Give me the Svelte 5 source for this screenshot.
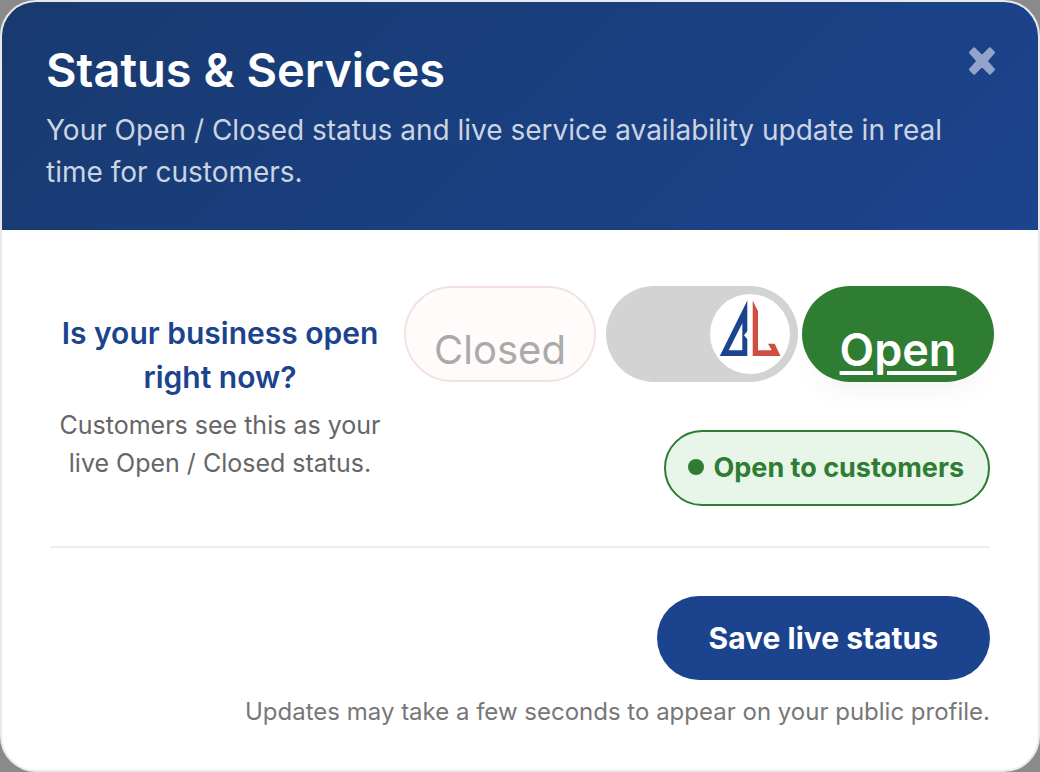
<script>
  let open = $state(true);
</script>

<main class="backdrop">
  <section class="card" aria-labelledby="title">
    <header>
      <div class="heading">
        <h1 id="title">Status &amp; Services</h1>
        <p>Your Open / Closed status and live service availability update in real time for customers.</p>
      </div>
      <button class="close" type="button" aria-label="Close">
        <svg viewBox="0 0 28 30" width="28" height="30" aria-hidden="true">
          <path d="M6 2.500 14 10.300 22 2.500 25.800 6.500 18.300 15 25.800 23.500 22 27.500 14 19.700 6 27.500 2.200 23.500 9.700 15 2.200 6.500Z" fill="currentColor" stroke="currentColor" stroke-width="2.500" stroke-linejoin="round" />
        </svg>
      </button>
    </header>

    <div class="body">
      <div class="status">
        <div class="question">
          <h2>Is your business open right now?</h2>
          <p>Customers see this as your live Open / Closed status.</p>
        </div>
        <div class="controls">
          <div class="switcher">
            <button type="button" class="choice closed" class:active={!open} onclick={() => (open = false)}>Closed</button>
            <button type="button" class="toggle" class:on={open} role="switch" aria-checked={open} aria-label="Business open" onclick={() => (open = !open)}>
              <span class="thumb">
                <svg viewBox="0 0 80 80" width="80" height="80" aria-hidden="true">
                  <path fill="#1c448e" fill-rule="evenodd" d="M37.3 6.5V37.3L34 41.3L37.3 45.3V62H9.8ZM32.3 29.3L18.7 56.3H32.3Z" />
                  <path fill="#cf4e40" d="M42.7 6.5L48 17.3V56.3H61.7L58 49.7H64.7L70.5 62H42.7Z" />
                </svg>
              </span>
            </button>
            <button type="button" class="choice open" class:active={open} onclick={() => (open = true)}>Open</button>
          </div>
          <div class="badge" role="status"><span class="dot"></span>{open ? 'Open to customers' : 'Closed to customers'}</div>
        </div>
      </div>

      <footer>
        <button type="button" class="save">Save live status</button>
        <p>Updates may take a few seconds to appear on your public profile.</p>
      </footer>
    </div>
  </section>
</main>

<style>
  :global(body) { margin: 0; background: #8a8a8a; }
  * { box-sizing: border-box; }
  h1, h2, p { margin: 0; }
  button { font: inherit; border: 0; padding: 0; cursor: pointer; }
  .backdrop { min-height: 100vh; display: grid; font-family: Inter, "Liberation Sans", sans-serif; }
  .card { border: 2px solid #e9e9e9; border-radius: 36px; overflow: hidden; background: #fff; }
  header {
    display: flex;
    justify-content: space-between;
    align-items: flex-start;
    padding: 40px 42px 36px 44px;
    color: #fff;
    background: linear-gradient(135deg, #183a70, #1c448e);
  }
  .heading { max-width: 900px; }
  h1 { font-size: 47px; line-height: 56px; font-weight: 600; margin-bottom: 11px; }
  header p { font-size: 28px; line-height: 42px; padding-bottom: 1px; color: #cbd4e2; }
  .close { display: block; flex: none; margin-top: 4px; background: none; color: #92a4ca; }
  .close svg { display: block; }
  .body { padding: 56px 48px 40px; }
  .status {
    display: grid;
    grid-template-columns: minmax(0, 340px) auto;
    justify-content: space-between;
    align-items: center;
    padding-bottom: 40px;
    border-bottom: 2px solid #eee;
  }
  .question { text-align: center; }
  h2 { font-size: 30px; line-height: 44px; font-weight: 600; color: #1c448e; }
  .question p { font-size: 25px; line-height: 38px; margin-top: 7px; color: #666; }
  .controls { display: flex; flex-direction: column; align-items: flex-end; gap: 48px; }
  .switcher { display: flex; margin-right: -4px; }
  .choice {
    width: 192px;
    height: 96px;
    padding-top: 32px;
    border-radius: 48px;
    font-size: 40px;
    line-height: 60px;
  }
  .closed { border: 2px solid #f3e2e2; background: #fffbfb; color: #aaa; }
  .open { background: #2e7d32; color: #fff; }
  .choice.active { font-size: 45px; font-weight: 600; text-decoration: underline; text-decoration-thickness: 4px; text-underline-offset: 5px; box-shadow: 0 20px 28px -12px #0000000d; }
  .closed.active { color: #b3261e; }
  .open:not(.active) { opacity: 0.5; }
  .toggle { display: flex; align-items: center; width: 192px; height: 96px; margin: 0 4px 0 10px; padding: 8px; border-radius: 48px; background: #d3d3d3; }
  .toggle.on { justify-content: flex-end; }
  .thumb { width: 80px; height: 80px; border-radius: 50%; background: #fff; }
  .thumb svg { display: block; }
  .badge {
    display: flex;
    align-items: center;
    gap: 9px;
    height: 76px;
    padding: 0 24px 2px 22px;
    border: 2px solid #2e7d32;
    border-radius: 38px;
    background: #e8f5e9;
    color: #2e7d32;
    font-size: 27px;
    font-weight: 700;
    white-space: nowrap;
  }
  .dot { width: 16px; height: 16px; border-radius: 50%; background: currentColor; }
  footer { display: flex; flex-direction: column; align-items: flex-end; padding-top: 48px; }
  .save { height: 84px; padding: 0 52px; border-radius: 42px; background: #1c448e; color: #fff; font-size: 30px; font-weight: 700; }
  footer p { margin-top: 14px; font-size: 24px; line-height: 36px; color: #777; text-align: right; }
</style>
